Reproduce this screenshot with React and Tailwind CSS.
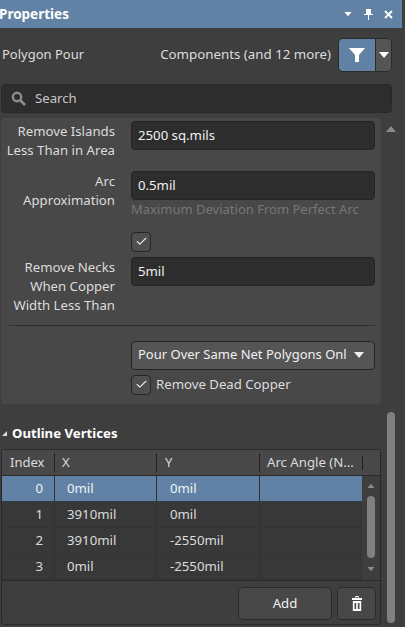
import { Check } from 'lucide-react';

const Input = ({ value }) => (
  <div className="h-[29px] w-[244px] shrink-0 rounded-[4px] border border-[#252525] bg-[#2d2d2d] pl-[6px] text-[13.2px] leading-[27px] text-[#f0f0f0]">
    {value}
  </div>
);

const CheckBox = () => (
  <div className="flex h-5 w-5 items-center justify-center rounded-[4px] border border-[#252525] bg-[#4f4f4f]">
    <Check size={13} strokeWidth={2} className="text-[#e8e8e8]" />
  </div>
);

const Caret = ({ className }) => (
  <svg width="10" height="6" viewBox="0 0 10 6" className={className}>
    <path d="M0 0h10L5 6z" fill="currentColor" />
  </svg>
);

const rows = [
  ['0', '0mil', '0mil'],
  ['1', '3910mil', '0mil'],
  ['2', '3910mil', '-2550mil'],
  ['3', '0mil', '-2550mil'],
];

export default function App() {
  return (
    <div className="h-[627px] w-[405px] overflow-hidden bg-[#3e3e3e] font-['Noto_Sans',sans-serif] text-[13.2px] text-[#dcdcdc]">
      {/* Title bar */}
      <div className="flex h-[28px] w-[402px] items-center justify-between bg-[#6182a4] pr-[9px]">
        <span className="-ml-px text-[13.5px] font-bold text-white">Properties</span>
        <div className="flex items-center gap-[11px] text-white">
          <Caret className="scale-75" />
          <svg width="9" height="11" viewBox="0 0 9 11">
            <path d="M2 0h5v5h2v1H5v5H4V6H0V5h2z" fill="currentColor" />
          </svg>
          <svg width="9" height="9" viewBox="0 0 9 9">
            <path d="M1 1l7 7M8 1L1 8" stroke="currentColor" strokeWidth="1.8" />
          </svg>
        </div>
      </div>

      {/* Filter row */}
      <div className="mt-[10px] flex h-[34px] w-[402px] items-center justify-between pl-[2px] pr-[10px]">
        <span className="text-[13px]">Polygon Pour</span>
        <div className="flex items-center gap-[7px]">
          <span className="text-[13.3px]">Components (and 12 more)</span>
          <div className="flex h-[34px] w-[54px] overflow-hidden rounded-[5px] border border-[#2a2a2a]">
            <div className="flex w-[36px] items-center justify-center bg-[#6182a4]">
              <svg width="16" height="16" viewBox="0 0 16 16">
                <path d="M0 1h16L10 8v7H6V8z" fill="#fff" />
              </svg>
            </div>
            <div className="flex flex-1 items-center justify-center border-l border-[#2a2a2a] bg-[#555555] text-white">
              <Caret />
            </div>
          </div>
        </div>
      </div>

      {/* Search */}
      <div className="ml-px mt-[12px] flex h-[29px] w-[391px] items-center gap-[9px] rounded-[4px] border border-[#292929] bg-[#2d2d2d] pl-[9px]">
        <svg width="15" height="15" viewBox="0 0 15 15" fill="none" stroke="#8c8c8c">
          <circle cx="6" cy="6" r="4.2" strokeWidth="2.4" />
          <path d="M9.5 9.5L14 14" strokeWidth="2.6" />
        </svg>
        <span className="text-[#c8c8c8]">Search</span>
      </div>

      <div className="flex">
        {/* Settings panel */}
        <div className="ml-px mt-[5px] h-[286px] w-[380px] rounded-[4px] bg-[#484848] pl-[8px] pr-[6px]">
          <div className="flex justify-end gap-4 whitespace-nowrap pt-[3px]">
            <div className="mt-px text-right leading-[19px]">
              Remove Islands<br />Less Than in Area
            </div>
            <Input value="2500 sq.mils" />
          </div>
          <div className="mt-[11px] flex justify-end gap-4 whitespace-nowrap">
            <div className="mt-px text-right leading-[19px]">
              Arc<br />Approximation
            </div>
            <div>
              <Input value="0.5mil" />
              <div className="text-[13px] text-[#767676]">Maximum Deviation From Perfect Arc</div>
            </div>
          </div>
          <div className="ml-[122px] mt-[12px]">
            <CheckBox />
          </div>
          <div className="mt-[5px] flex justify-end gap-4 whitespace-nowrap">
            <div className="mt-px text-right leading-[19px]">
              Remove Necks<br />When Copper<br />Width Less Than
            </div>
            <Input value="5mil" />
          </div>
          <div className="mt-[10px] h-px bg-[#2e2e2e]" />
          <div className="ml-[122px] mt-[15px] flex h-[29px] w-[244px] items-center justify-between rounded-[4px] border border-[#252525] bg-[#555555] pl-[6px] pr-[10px] whitespace-nowrap text-[13px] text-[#f0f0f0]">
            <span>Pour Over Same Net Polygons Onl</span>
            <Caret />
          </div>
          <div className="ml-[122px] mt-[5px] flex items-center gap-[5px]">
            <CheckBox />
            <span>Remove Dead Copper</span>
          </div>
        </div>
        <div className="ml-[5px] mt-[13px]">
          <Caret className="rotate-180 text-[#8a8a8a]" />
        </div>
      </div>

      <div className="flex">
        <div className="w-[381px]">
          <div className="flex h-[45px] items-center pl-[2px] pt-[14px] text-[13.2px] font-bold text-white">
            <span className="h-0 w-0 border-b-[5px] border-l-[5px] border-b-[#dcdcdc] border-l-transparent" />
            <span className="ml-[5px]">Outline Vertices</span>
          </div>
          {/* Vertices table */}
          <div className="ml-px h-[176px] w-[380px] rounded-[3px] border border-[#2a2a2a]">
            <div className="flex h-[26px] items-center border-b border-[#2a2a2a] bg-[#484848]">
              <div className="w-[52px] pl-[8px] text-[13px]">Index</div>
              <div className="w-[102px] border-l border-[#222] pl-[7px]">X</div>
              <div className="w-[103px] border-l border-[#222] pl-[8px]">Y</div>
              <div className="w-[103px] whitespace-nowrap border-l border-[#222] pl-[7px]">Arc Angle (N...</div>
              <div className="h-[14px] border-l border-[#222]" />
            </div>
            <div className="flex h-[104px]">
              <div className="w-[360px]">
                {rows.map((r, i) => (
                  <div
                    key={r[0]}
                    className={`flex h-[26px] items-center border-b ${i === 0 ? 'border-[#2f3d4d] bg-[#6182a4] text-[#eef2f6]' : 'border-[#333] bg-[#383838]'}`}
                  >
                    <div className="w-[52px] pr-[11px] text-right">{r[0]}</div>
                    <div className="h-full w-[102px] border-l border-[#303030] pl-[12px] leading-[25px]">{r[1]}</div>
                    <div className="h-full w-[103px] border-l border-[#303030] pl-[13px] leading-[25px]">{r[2]}</div>
                    <div className="h-full flex-1 border-l border-[#303030]" />
                  </div>
                ))}
              </div>
              <div className="flex flex-1 flex-col items-center bg-[#3e3e3e] pt-[7px]">
                <Caret className="rotate-180 scale-75 text-[#8a8a8a]" />
                <div className="mt-[7px] h-[62px] w-2 rounded-full bg-[#808080]" />
                <Caret className="mt-[8px] scale-75 text-[#8a8a8a]" />
              </div>
            </div>
            <div className="flex items-center justify-end gap-[5px] border-t border-[#2a2a2a] pr-[4px] pt-[6px]">
              <div className="flex h-[33px] w-[94px] items-center justify-center rounded-[5px] border border-[#2a2a2a] bg-[#484848] text-[#f0f0f0]">
                Add
              </div>
              <div className="flex h-[33px] w-[39px] items-center justify-center rounded-[5px] border border-[#2a2a2a] bg-[#484848]">
                <svg width="10" height="15" viewBox="0 0 12 15" preserveAspectRatio="none" fill="#fff">
                  <path d="M4 0h4v2h4v2H0V2h4zM5 1v1h2V1z" fillRule="evenodd" />
                  <path d="M1 5h10v10H1zM3 7v6h2V7zM7 7v6h2V7z" fillRule="evenodd" />
                </svg>
              </div>
            </div>
          </div>
        </div>
        <div className="ml-[6px] mt-[8px] h-[211px] w-2 rounded-full bg-[#808080]" />
      </div>
    </div>
  );
}
